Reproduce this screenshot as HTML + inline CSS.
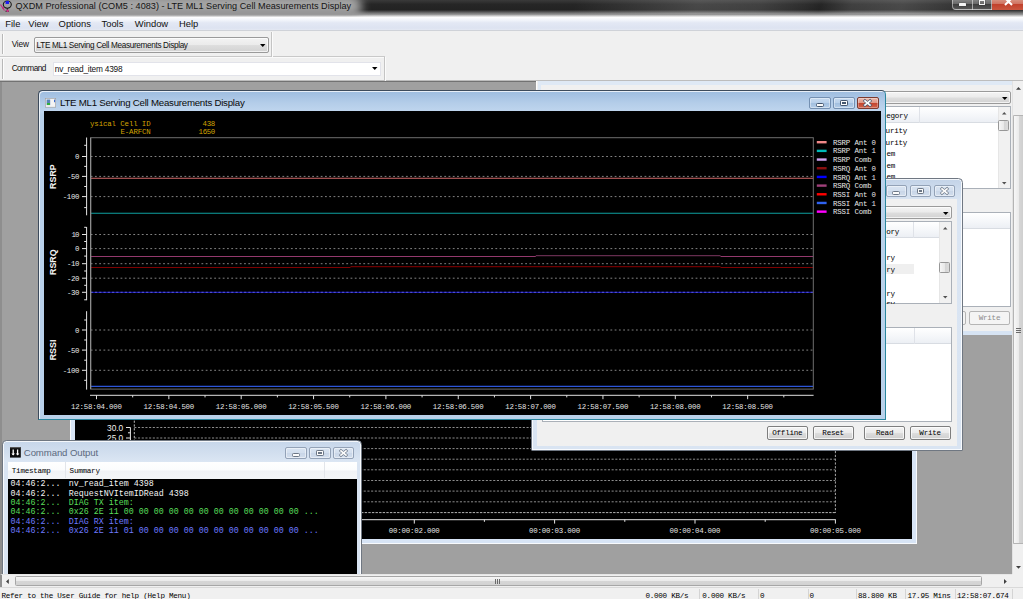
<!DOCTYPE html>
<html lang="en"><head><meta charset="utf-8"><title>QXDM Professional</title>
<style>
html,body{margin:0;padding:0;}
body{width:1023px;height:599px;overflow:hidden;position:relative;background:#a0a0a0;font-family:"Liberation Sans",sans-serif;font-size:9px;color:#000;}
div,span{position:absolute;box-sizing:border-box;white-space:nowrap;}
svg{position:absolute;overflow:visible;}
.ui{font-family:"Liberation Sans",sans-serif;}
.mono{font-family:"Liberation Mono",monospace;}
.sim{font-family:"Liberation Mono",monospace;font-size:7.6px;letter-spacing:-0.26px;color:#000;}
.btn{border:1px solid #7e7e7e;border-radius:2px;background:linear-gradient(#f4f4f4,#ebebeb 48%,#dddddd 52%,#cfcfcf);text-align:center;box-shadow:inset 0 0 0 1px rgba(255,255,255,.75);}
.cbtn{border:1px solid #93a2b7;border-radius:2px;background:linear-gradient(#d9e4f2,#d3dfee 48%,#c9d6e8 52%,#d2deed);box-shadow:inset 0 0 0 1px rgba(255,255,255,.45);}
.abtn{border:1px solid #7490b2;border-radius:2px;background:linear-gradient(#c6daf0,#b9d0ea 48%,#a2bfdf 52%,#b3cce8);box-shadow:inset 0 0 0 1px rgba(255,255,255,.4);}
.combo{border:1px solid #9a9a9a;border-radius:2px;background:linear-gradient(#f3f3f3,#ebebeb 48%,#dedede 52%,#d2d2d2);box-shadow:inset 0 0 0 1px rgba(255,255,255,.7);}
.lb{background:#fff;border:1px solid #aab0b8;}
.hdr{background:linear-gradient(#ffffff,#f4f6f9 60%,#eceff4);border-bottom:1px solid #d8dce2;}
</style></head>
<body>
<div style="left:0px;top:0px;width:1023px;height:17px;background:linear-gradient(#3a3a3a 0,#262626 25%,#232323 58%,#444 66%,#6c6c6c 75%,#949494 85%,#bababa 93%,#e2e2e2 100%);"></div>
<div style="left:0px;top:0px;width:1023px;height:13.5px;background:linear-gradient(108deg,rgba(255,255,255,0) 56%,rgba(255,255,255,.08) 62%,rgba(255,255,255,.16) 68%,rgba(255,255,255,.13) 74%,rgba(255,255,255,.04) 78.5%,rgba(255,255,255,0) 80%,rgba(255,255,255,.12) 83%,rgba(255,255,255,.17) 88%,rgba(255,255,255,.08) 93%,rgba(255,255,255,.02) 98%);"></div>
<div style="left:-12px;top:-5px;width:374px;height:24px;background:linear-gradient(#b0b0b0,#a2a2a2 55%,#8e8e8e);filter:blur(5px);border-radius:0 12px 12px 0;"></div>
<div style="left:0px;top:15px;width:1023px;height:2px;background:linear-gradient(rgba(200,200,200,0),#e8e8e8);"></div>
<svg style="left:0;top:0" width="15" height="14" viewBox="0 0 15 14"><ellipse cx="7.3" cy="4.6" rx="4" ry="3.6" fill="none" stroke="#1a1a1a" stroke-width="1.1"/><path d="M7.3 8 L7.3 11 M5.5 11.2 L9 11.2" stroke="#1a1a1a" stroke-width="1" fill="none"/><rect x="5.6" y="1" width="3.4" height="3" fill="#1b1bf0"/><path d="M0.5 4.5 L4.5 10.5" stroke="#c03080" stroke-width="1.2"/><circle cx="7.6" cy="10.8" r="1.3" fill="#d03088"/><circle cx="3.2" cy="8" r="1" fill="#c03080"/></svg>
<span class="ui" style="left:15.5px;top:-0.1px;font-size:9.1px;line-height:13px;color:#141414;letter-spacing:0.03px;">QXDM Professional (COM5 : 4083) - LTE ML1 Serving Cell Measurements Display</span>
<div style="left:951.5px;top:-2px;width:75px;height:12.3px;border:1px solid rgba(225,225,225,.55);border-radius:0 0 0 4px;background:linear-gradient(#8a8a8a,#6a6a6a 45%,#3d3d3d 50%,#555);"></div>
<div style="left:972px;top:-1px;width:1px;height:10.5px;background:rgba(230,230,230,.6);"></div>
<div style="left:991px;top:-1px;width:1px;height:10.5px;background:rgba(230,230,230,.6);"></div>
<div style="left:992px;top:-1px;width:32px;height:10.5px;background:linear-gradient(#d99684,#cf715f 45%,#c2412c 50%,#c9563f);"></div>
<div style="left:958.5px;top:3.4px;width:7px;height:2.4px;background:#f4f4f4;border-radius:.5px;box-shadow:0 0 1px #222;"></div>
<div style="left:978.5px;top:-0.5px;width:6px;height:5.5px;border:1.3px solid #f4f4f4;border-top-width:1.6px;box-shadow:0 0 1px #222;"></div>
<svg style="left:1004.3px;top:-2.3px" width="9" height="8" viewBox="0 0 9 8"><path d="M1 0 L8 7 M8 0 L1 7" stroke="#fff" stroke-width="2" fill="none"/></svg>
<div style="left:0px;top:17px;width:1023px;height:14px;background:linear-gradient(#ffffff 0,#f1f4fa 25%,#e3e8f4 45%,#dde3f1 85%,#e4e8f2 100%);border-bottom:1px solid #cfd2d8;"></div>
<span class="ui" style="left:5.3px;top:18.2px;font-size:9.4px;line-height:12px;color:#111;">File</span>
<span class="ui" style="left:28.3px;top:18.2px;font-size:9.4px;line-height:12px;color:#111;">View</span>
<span class="ui" style="left:58.6px;top:18.2px;font-size:9.4px;line-height:12px;color:#111;">Options</span>
<span class="ui" style="left:101.5px;top:18.2px;font-size:9.4px;line-height:12px;color:#111;">Tools</span>
<span class="ui" style="left:134.8px;top:18.2px;font-size:9.4px;line-height:12px;color:#111;">Window</span>
<span class="ui" style="left:179px;top:18.2px;font-size:9.4px;line-height:12px;color:#111;">Help</span>
<div style="left:0px;top:31px;width:1023px;height:50px;background:#f0f0f0;"></div>
<div style="left:0px;top:80px;width:1023px;height:1px;background:#bdbdbd;"></div>
<div style="left:0px;top:81px;width:1023px;height:1px;background:#727272;"></div>
<div style="left:0px;top:56px;width:384.5px;height:1px;background:#c9c9c9;"></div>
<div style="left:0px;top:57px;width:384.5px;height:1px;background:#fafafa;"></div>
<div style="left:271px;top:32px;width:1px;height:24.5px;background:#c4c4c4;"></div>
<div style="left:272px;top:32px;width:1px;height:24.5px;background:#fbfbfb;"></div>
<div style="left:384px;top:56.5px;width:1px;height:24px;background:#c4c4c4;"></div>
<div style="left:385px;top:56.5px;width:1px;height:24px;background:#fbfbfb;"></div>
<div style="left:2px;top:34px;width:1px;height:20px;background:#b8b8b8;"></div>
<div style="left:3px;top:34px;width:1px;height:20px;background:#fdfdfd;"></div>
<div style="left:2px;top:59px;width:1px;height:20px;background:#b8b8b8;"></div>
<div style="left:3px;top:59px;width:1px;height:20px;background:#fdfdfd;"></div>
<span class="ui" style="left:11.7px;top:38.6px;font-size:8.3px;line-height:11px;color:#111;letter-spacing:-0.2px;">View</span>
<div class="combo" style="left:34.3px;top:37px;width:235px;height:15.8px;"></div>
<span class="ui" style="left:36.6px;top:40.1px;font-size:8.2px;line-height:11px;color:#111;letter-spacing:-0.33px;">LTE ML1 Serving Cell Measurements Display</span>
<svg style="left:260.25px;top:43.8px" width="5.5" height="3" viewBox="0 0 5.5 3"><polygon points="0,0 5.5,0 2.75,3" fill="#000"/></svg>
<span class="ui" style="left:11.7px;top:63.3px;font-size:8.3px;line-height:11px;color:#111;letter-spacing:-0.62px;">Command</span>
<div style="left:52.5px;top:62px;width:328px;height:14px;background:#fff;border:1px solid #e2e3ea;"></div>
<span class="ui" style="left:54.8px;top:63.7px;font-size:8.3px;line-height:11px;color:#111;letter-spacing:-0.2px;">nv_read_item 4398</span>
<svg style="left:371.55px;top:67.3px" width="5.5" height="3" viewBox="0 0 5.5 3"><polygon points="0,0 5.5,0 2.75,3" fill="#000"/></svg>
<div style="left:0px;top:82px;width:1012px;height:493px;background:#a0a0a0;border-left:2px solid #8e8e8e;"></div>
<div style="left:536px;top:81px;width:475.5px;height:254px;background:#f0f0f0;border-left:1.5px solid #fdfdfd;"></div>
<div style="left:537.5px;top:81px;width:474.0px;height:3.5px;background:#dfe9f5;"></div>
<div style="left:537.5px;top:81px;width:3.5px;height:254px;background:#dfe9f5;"></div>
<div style="left:537.5px;top:330.7px;width:474.0px;height:4.3px;background:#d6e3f3;"></div>
<div class="combo" style="left:880px;top:90.8px;width:131px;height:13.2px;"></div>
<svg style="left:1002.25px;top:96.8px" width="5.5" height="3" viewBox="0 0 5.5 3"><polygon points="0,0 5.5,0 2.75,3" fill="#000"/></svg>
<div class="lb" style="left:880px;top:106.2px;width:131px;height:83.3px;"></div>
<div class="hdr" style="left:881px;top:107.2px;width:116.5px;height:16.3px;"></div>
<div style="left:919.2px;top:107.2px;width:1px;height:16px;background:#dfe2e8;"></div>
<span class="sim" style="left:886.2px;top:111.4px;line-height:10px;">egory</span>
<span class="sim" style="left:885.6px;top:126px;line-height:10px;">urity</span>
<span class="sim" style="left:885.6px;top:137.5px;line-height:10px;">urity</span>
<span class="sim" style="left:886.5px;top:149px;line-height:10px;">em</span>
<span class="sim" style="left:886.5px;top:160.5px;line-height:10px;">em</span>
<span class="sim" style="left:886.5px;top:172px;line-height:10px;">em</span>
<div style="left:997.6px;top:107.2px;width:12.4px;height:81.3px;background:#f1f1f1;border-left:1px solid #e6e6e6;"></div>
<svg style="left:1001.75px;top:112.2px" width="4.5" height="2.6" viewBox="0 0 4.5 2.6"><polygon points="0,2.6 4.5,2.6 2.25,0" fill="#505050"/></svg>
<div style="left:998.3px;top:120px;width:11.2px;height:10.6px;border:1px solid #979797;border-radius:1.5px;background:linear-gradient(to right,#f6f6f6,#e9e9e9 50%,#d4d4d4 52%,#dcdcdc);"></div>
<svg style="left:1001.75px;top:181.7px" width="4.5" height="2.6" viewBox="0 0 4.5 2.6"><polygon points="0,0 4.5,0 2.25,2.6" fill="#505050"/></svg>
<div class="lb" style="left:880px;top:211.7px;width:131px;height:95.6px;"></div>
<div class="hdr" style="left:881px;top:212.7px;width:129px;height:16.2px;"></div>
<div style="left:935px;top:311.3px;width:30.5px;height:13.3px;border:1px solid #b5b5b5;border-radius:2px;background:#f4f4f4;"></div>
<div style="left:969.3px;top:311.3px;width:41.2px;height:13.3px;border:1px solid #b5b5b5;border-radius:2px;background:#f4f4f4;"></div>
<span class="sim" style="left:978.7px;top:313px;line-height:10px;color:#8c8c8c;">Write</span>
<div style="left:69.5px;top:300px;width:847.5px;height:243.5px;background:#d7e4f5;border:1.3px solid #f8fafd;border-top:none;"></div>
<div style="left:75px;top:300px;width:836.5px;height:238.5px;background:#000;"></div>
<svg style="left:75px;top:419px" width="842" height="125" viewBox="75 419 842 125" font-family="Liberation Sans, sans-serif"><path d="M134.3 420.6 V513" stroke="#b8b8b8" stroke-width="1" stroke-dasharray="2.2 1.6" fill="none"/><path d="M835.4 420.6 V513" stroke="#a8a8a8" stroke-width="1" stroke-dasharray="2.2 1.6" fill="none"/><path d="M134.3 427.5 H835.4" stroke="#8c8c8c" stroke-width="1" stroke-dasharray="2.1 1.6" fill="none"/><path d="M134.3 438 H835.4" stroke="#8c8c8c" stroke-width="1" stroke-dasharray="2.1 1.6" fill="none"/><path d="M134.3 448.6 H835.4" stroke="#8c8c8c" stroke-width="1" stroke-dasharray="2.1 1.6" fill="none"/><path d="M134.3 459.2 H835.4" stroke="#8c8c8c" stroke-width="1" stroke-dasharray="2.1 1.6" fill="none"/><path d="M134.3 469.8 H835.4" stroke="#8c8c8c" stroke-width="1" stroke-dasharray="2.1 1.6" fill="none"/><path d="M134.3 480.5 H835.4" stroke="#8c8c8c" stroke-width="1" stroke-dasharray="2.1 1.6" fill="none"/><path d="M134.3 491.1 H835.4" stroke="#8c8c8c" stroke-width="1" stroke-dasharray="2.1 1.6" fill="none"/><path d="M134.3 501.8 H835.4" stroke="#8c8c8c" stroke-width="1" stroke-dasharray="2.1 1.6" fill="none"/><path d="M134.3 512.6 H835.4" stroke="#b4b4b4" stroke-width="1" stroke-dasharray="2.4 1.2" fill="none"/><path d="M130.4 427.5 V520" stroke="#e8e8e8" stroke-width="1" fill="none"/><path d="M126 427.5 H130.4" stroke="#e8e8e8" stroke-width="1" fill="none"/><path d="M128 432.8 H130.4" stroke="#e8e8e8" stroke-width="1" fill="none"/><path d="M126 438 H130.4" stroke="#e8e8e8" stroke-width="1" fill="none"/><path d="M128 443.3 H130.4" stroke="#e8e8e8" stroke-width="1" fill="none"/><path d="M126 448.6 H130.4" stroke="#e8e8e8" stroke-width="1" fill="none"/><path d="M128 453.90000000000003 H130.4" stroke="#e8e8e8" stroke-width="1" fill="none"/><path d="M126 459.2 H130.4" stroke="#e8e8e8" stroke-width="1" fill="none"/><path d="M128 464.5 H130.4" stroke="#e8e8e8" stroke-width="1" fill="none"/><path d="M126 469.8 H130.4" stroke="#e8e8e8" stroke-width="1" fill="none"/><path d="M128 475.1 H130.4" stroke="#e8e8e8" stroke-width="1" fill="none"/><path d="M126 480.5 H130.4" stroke="#e8e8e8" stroke-width="1" fill="none"/><path d="M128 485.8 H130.4" stroke="#e8e8e8" stroke-width="1" fill="none"/><path d="M126 491.1 H130.4" stroke="#e8e8e8" stroke-width="1" fill="none"/><path d="M128 496.40000000000003 H130.4" stroke="#e8e8e8" stroke-width="1" fill="none"/><path d="M126 501.8 H130.4" stroke="#e8e8e8" stroke-width="1" fill="none"/><path d="M128 507.1 H130.4" stroke="#e8e8e8" stroke-width="1" fill="none"/><text x="123.2" y="430.7" font-size="8.3" fill="#f0f0f0" text-anchor="end">30.0</text><text x="123.2" y="441" font-size="8.3" fill="#f0f0f0" text-anchor="end">25.0</text><path d="M130 519.7 H835.8" stroke="#e6e6e6" stroke-width="1" fill="none"/><path d="M414.3 519.7 V523.6" stroke="#e6e6e6" stroke-width="1" fill="none"/><path d="M344.1 519.7 V521.8" stroke="#e6e6e6" stroke-width="1" fill="none"/><text x="414.3" y="532.8" font-size="7.4" fill="#e4e4e4" text-anchor="middle" font-family="Liberation Mono, monospace" textLength="51" lengthAdjust="spacing">00:00:02.000</text><path d="M554.6 519.7 V523.6" stroke="#e6e6e6" stroke-width="1" fill="none"/><path d="M484.40000000000003 519.7 V521.8" stroke="#e6e6e6" stroke-width="1" fill="none"/><text x="554.6" y="532.8" font-size="7.4" fill="#e4e4e4" text-anchor="middle" font-family="Liberation Mono, monospace" textLength="51" lengthAdjust="spacing">00:00:03.000</text><path d="M695 519.7 V523.6" stroke="#e6e6e6" stroke-width="1" fill="none"/><path d="M624.8 519.7 V521.8" stroke="#e6e6e6" stroke-width="1" fill="none"/><text x="695" y="532.8" font-size="7.4" fill="#e4e4e4" text-anchor="middle" font-family="Liberation Mono, monospace" textLength="51" lengthAdjust="spacing">00:00:04.000</text><path d="M835.4 519.7 V523.6" stroke="#e6e6e6" stroke-width="1" fill="none"/><path d="M765.1999999999999 519.7 V521.8" stroke="#e6e6e6" stroke-width="1" fill="none"/><text x="835.4" y="532.8" font-size="7.4" fill="#e4e4e4" text-anchor="middle" font-family="Liberation Mono, monospace" textLength="51" lengthAdjust="spacing">00:00:05.000</text></svg>
<div style="left:530.7px;top:178.2px;width:432.0px;height:272.8px;border:1px solid #6f7782;border-radius:4.5px 4.5px 1px 1px;background:linear-gradient(#c3d3e8 0,#d2dfef 14px,#dae5f3 22px,#d9e4f2 100%);box-shadow:inset 0 0 0 1px rgba(255,255,255,.8);"></div>
<div style="left:536.7px;top:199px;width:420.0px;height:246.8px;background:#f0f0f0;"></div>
<div class="cbtn" style="left:885.6px;top:185.2px;width:21.6px;height:11.8px;"></div>
<div class="cbtn" style="left:909.6px;top:185.2px;width:21.6px;height:11.8px;"></div>
<div class="cbtn" style="left:933.6px;top:185.2px;width:21.6px;height:11.8px;"></div>
<div style="left:892.4px;top:191.2px;width:8px;height:3.7px;background:#fbfbfb;border:1px solid #6c7786;border-radius:1.5px;"></div>
<div style="left:916.6999999999999px;top:188.29999999999998px;width:7.4px;height:5.8px;background:#fbfbfb;border:1px solid #6c7786;border-radius:1.2px;"></div>
<div style="left:918.6999999999999px;top:190.2px;width:3.4px;height:1.9px;background:#6c7786;"></div>
<svg style="left:939.9px;top:187.29999999999998px" width="9" height="8" viewBox="0 0 9 8"><path d="M2 1.9 L7 6.1 M7 1.9 L2 6.1" stroke="#6c7786" stroke-width="3" stroke-linecap="square" fill="none"/><path d="M2 1.9 L7 6.1 M7 1.9 L2 6.1" stroke="#fdfdfd" stroke-width="1.8" stroke-linecap="square" fill="none"/></svg>
<div class="combo" style="left:600px;top:206.4px;width:351.6px;height:13px;"></div>
<svg style="left:942.85px;top:212.0px" width="5.5" height="3" viewBox="0 0 5.5 3"><polygon points="0,0 5.5,0 2.75,3" fill="#000"/></svg>
<div class="lb" style="left:542.4px;top:221.2px;width:409.2px;height:83.2px;"></div>
<div class="hdr" style="left:543.4px;top:222.2px;width:395.2px;height:15.8px;"></div>
<div style="left:912.9px;top:222.2px;width:1px;height:15.6px;background:#dfe2e8;"></div>
<span class="sim" style="left:886.2px;top:226.6px;line-height:10px;">ory</span>
<div style="left:543.4px;top:263.6px;width:370.6px;height:10.2px;background:#efefef;"></div>
<span class="sim" style="left:886.2px;top:253.3px;line-height:10px;">ry</span>
<span class="sim" style="left:886.2px;top:265.0px;line-height:10px;">ry</span>
<span class="sim" style="left:886.2px;top:288.5px;line-height:10px;">ry</span>
<div style="left:886.2px;top:299px;width:30px;height:4.6px;overflow:hidden;"><span class="sim" style="left:0;top:0;line-height:10px;">ry</span></div>
<div style="left:938.8px;top:222.2px;width:11.8px;height:81.2px;background:#f1f1f1;border-left:1px solid #e6e6e6;"></div>
<svg style="left:942.75px;top:227.1px" width="4.5" height="2.6" viewBox="0 0 4.5 2.6"><polygon points="0,2.6 4.5,2.6 2.25,0" fill="#505050"/></svg>
<div style="left:939.2px;top:262px;width:10.4px;height:10.7px;border:1px solid #979797;border-radius:1.5px;background:linear-gradient(to right,#f6f6f6,#e9e9e9 50%,#d4d4d4 52%,#dcdcdc);"></div>
<svg style="left:942.75px;top:296.3px" width="4.5" height="2.6" viewBox="0 0 4.5 2.6"><polygon points="0,0 4.5,0 2.25,2.6" fill="#505050"/></svg>
<div class="lb" style="left:542.4px;top:327.4px;width:409.2px;height:94.8px;"></div>
<div class="hdr" style="left:543.4px;top:328.4px;width:407.2px;height:15.8px;"></div>
<div style="left:913.5px;top:328.4px;width:1px;height:15.6px;background:#dfe2e8;"></div>
<div class="btn" style="left:766.6px;top:426px;width:41.6px;height:13.5px;"></div>
<span class="sim" style="left:772.25px;top:427.8px;line-height:10px;">Offline</span>
<div class="btn" style="left:812.5px;top:426px;width:41.4px;height:13.5px;"></div>
<span class="sim" style="left:822.35px;top:427.8px;line-height:10px;">Reset</span>
<div class="btn" style="left:863.9px;top:426px;width:41.6px;height:13.5px;"></div>
<span class="sim" style="left:875.9999999999999px;top:427.8px;line-height:10px;">Read</span>
<div class="btn" style="left:909.5px;top:426px;width:41.4px;height:13.5px;"></div>
<span class="sim" style="left:919.35px;top:427.8px;line-height:10px;">Write</span>
<div style="left:38.2px;top:90.2px;width:847.5999999999999px;height:329.8px;border:1px solid #3d4b5c;border-right-color:#2a879f;border-bottom-color:#2a879f;border-radius:4.5px 4.5px 0 0;background:linear-gradient(#9dbcdf 0,#b4cde9 12px,#c0d6ee 21px,#b9d1ea 24px,#b9d1ea 100%);box-shadow:inset 1px 1px 0 0 rgba(255,255,255,.75);"></div>
<div style="left:44.1px;top:111.4px;width:836.5px;height:303.3px;background:#000;"></div>
<svg style="left:45px;top:98px" width="11" height="9.5" viewBox="0 0 11 9.5"><rect x="0.3" y="0.3" width="10.4" height="8.9" fill="#f4f4f4" stroke="#9a9a9a" stroke-width=".6"/><rect x="1.6" y="1.5" width="3.6" height="5.6" fill="#5a84b8"/><rect x="2" y="5" width="3" height="2" fill="#2fae3a"/><rect x="9" y="1.6" width="1.1" height="2.6" fill="#3a6ad0"/></svg>
<span class="ui" style="left:60px;top:96.4px;font-size:9.7px;line-height:13px;color:#0a0a0a;letter-spacing:-0.25px;">LTE ML1 Serving Cell Measurements Display</span>
<div class="abtn" style="left:809.2px;top:97.1px;width:21.6px;height:12.3px;"></div>
<div class="abtn" style="left:833.2px;top:97.1px;width:21.6px;height:12.3px;"></div>
<div style="left:857px;top:97.1px;width:21.6px;height:12.3px;border:1px solid #7c3a30;border-radius:2px;background:linear-gradient(#ebb8ab,#de9686 48%,#c4442d 52%,#d2654e);box-shadow:inset 0 0 0 1px rgba(255,255,255,.3);"></div>
<div style="left:816.0px;top:103.35px;width:8px;height:3.7px;background:#fbfbfb;border:1px solid #44566e;border-radius:1.5px;"></div>
<div style="left:840.3px;top:100.45px;width:7.4px;height:5.8px;background:#fbfbfb;border:1px solid #44566e;border-radius:1.2px;"></div>
<div style="left:842.3px;top:102.35px;width:3.4px;height:1.9px;background:#44566e;"></div>
<svg style="left:863.3px;top:99.45px" width="9" height="8" viewBox="0 0 9 8"><path d="M2 1.9 L7 6.1 M7 1.9 L2 6.1" stroke="#44566e" stroke-width="3" stroke-linecap="square" fill="none"/><path d="M2 1.9 L7 6.1 M7 1.9 L2 6.1" stroke="#fdfdfd" stroke-width="1.8" stroke-linecap="square" fill="none"/></svg>
<svg style="left:44px;top:111px" width="837" height="304" viewBox="44 111 837 304" font-family="Liberation Mono, monospace"><path d="M90.7 156.5 H813.3" stroke="#828282" stroke-width="1" stroke-dasharray="1.8 2.46" fill="none"/><path d="M90.7 176.4 H813.3" stroke="#828282" stroke-width="1" stroke-dasharray="1.8 2.46" fill="none"/><path d="M90.7 196.6 H813.3" stroke="#828282" stroke-width="1" stroke-dasharray="1.8 2.46" fill="none"/><path d="M90.7 234.5 H813.3" stroke="#828282" stroke-width="1" stroke-dasharray="1.8 2.46" fill="none"/><path d="M90.7 248.6 H813.3" stroke="#828282" stroke-width="1" stroke-dasharray="1.8 2.46" fill="none"/><path d="M90.7 263.7 H813.3" stroke="#828282" stroke-width="1" stroke-dasharray="1.8 2.46" fill="none"/><path d="M90.7 278.2 H813.3" stroke="#828282" stroke-width="1" stroke-dasharray="1.8 2.46" fill="none"/><path d="M90.7 330 H813.3" stroke="#828282" stroke-width="1" stroke-dasharray="1.8 2.46" fill="none"/><path d="M90.7 350.1 H813.3" stroke="#828282" stroke-width="1" stroke-dasharray="1.8 2.46" fill="none"/><path d="M90.7 370.3 H813.3" stroke="#828282" stroke-width="1" stroke-dasharray="1.8 2.46" fill="none"/><path d="M90.7 178.3 H813.3" stroke="#d46a6a" stroke-width="1.1" fill="none"/><path d="M90.7 213.3 H813.3" stroke="#0ea0a0" stroke-width="1.1" fill="none"/><path d="M90.7 256.4 H535.8 M720.5 256.4 H813.3" stroke="#93396d" stroke-width="1.05" fill="none"/><path d="M535.8 255.7 H720.5" stroke="#642c4e" stroke-width="1.2" fill="none"/><path d="M90.7 267.5 H350.5 M720.5 267.5 H813.3" stroke="#7e0202" stroke-width="1" fill="none"/><path d="M350.5 266.6 H720.5" stroke="#6e0000" stroke-width="1.1" fill="none"/><path d="M90.7 292.3 H813.3" stroke="#1414a8" stroke-width="1.3" fill="none"/><path d="M90.7 292.3 H813.3" stroke="#5c5cd6" stroke-width="1" stroke-dasharray="2.2 2.06" fill="none"/><path d="M90.7 386.4 H813.3" stroke="#2c55d8" stroke-width="1.2" fill="none"/><rect x="90.7" y="137.7" width="722.5999999999999" height="251.40000000000003" fill="none" stroke="#6e6e6e" stroke-width="1"/><path d="M90.7 137.7 V389.1" stroke="#9a9a9a" stroke-width="1" fill="none"/><path d="M86.6 137.5 V215.3" stroke="#e4e4e4" stroke-width="1" fill="none"/><path d="M82 156.5 H86.6" stroke="#e4e4e4" stroke-width="1" fill="none"/><text x="79.4" y="159.1" font-size="7.4" fill="#e8e8e8" text-anchor="end" textLength="3.7" lengthAdjust="spacing">0</text><path d="M82 176.4 H86.6" stroke="#e4e4e4" stroke-width="1" fill="none"/><text x="79.4" y="179.0" font-size="7.4" fill="#e8e8e8" text-anchor="end" textLength="12.3" lengthAdjust="spacing">-50</text><path d="M82 196.6 H86.6" stroke="#e4e4e4" stroke-width="1" fill="none"/><text x="79.4" y="199.2" font-size="7.4" fill="#e8e8e8" text-anchor="end" textLength="16.6" lengthAdjust="spacing">-100</text><path d="M84.2 145.3 H86.6" stroke="#e4e4e4" stroke-width="1" fill="none"/><path d="M84.2 166.4 H86.6" stroke="#e4e4e4" stroke-width="1" fill="none"/><path d="M84.2 186.5 H86.6" stroke="#e4e4e4" stroke-width="1" fill="none"/><path d="M84.2 207.6 H86.6" stroke="#e4e4e4" stroke-width="1" fill="none"/><path d="M86.6 227 V300.2" stroke="#e4e4e4" stroke-width="1" fill="none"/><path d="M82 234.5 H86.6" stroke="#e4e4e4" stroke-width="1" fill="none"/><text x="79.4" y="237.1" font-size="7.4" fill="#e8e8e8" text-anchor="end" textLength="8.0" lengthAdjust="spacing">10</text><path d="M82 248.6 H86.6" stroke="#e4e4e4" stroke-width="1" fill="none"/><text x="79.4" y="251.2" font-size="7.4" fill="#e8e8e8" text-anchor="end" textLength="3.7" lengthAdjust="spacing">0</text><path d="M82 263.7 H86.6" stroke="#e4e4e4" stroke-width="1" fill="none"/><text x="79.4" y="266.3" font-size="7.4" fill="#e8e8e8" text-anchor="end" textLength="12.3" lengthAdjust="spacing">-10</text><path d="M82 278.2 H86.6" stroke="#e4e4e4" stroke-width="1" fill="none"/><text x="79.4" y="280.8" font-size="7.4" fill="#e8e8e8" text-anchor="end" textLength="12.3" lengthAdjust="spacing">-20</text><path d="M82 292.3 H86.6" stroke="#e4e4e4" stroke-width="1" fill="none"/><text x="79.4" y="294.90000000000003" font-size="7.4" fill="#e8e8e8" text-anchor="end" textLength="12.3" lengthAdjust="spacing">-30</text><path d="M84.2 227.3 H86.6" stroke="#e4e4e4" stroke-width="1" fill="none"/><path d="M84.2 241.5 H86.6" stroke="#e4e4e4" stroke-width="1" fill="none"/><path d="M84.2 256.1 H86.6" stroke="#e4e4e4" stroke-width="1" fill="none"/><path d="M84.2 271 H86.6" stroke="#e4e4e4" stroke-width="1" fill="none"/><path d="M84.2 285.3 H86.6" stroke="#e4e4e4" stroke-width="1" fill="none"/><path d="M84.2 299.8 H86.6" stroke="#e4e4e4" stroke-width="1" fill="none"/><path d="M86.6 311.2 V389.6" stroke="#e4e4e4" stroke-width="1" fill="none"/><path d="M82 330 H86.6" stroke="#e4e4e4" stroke-width="1" fill="none"/><text x="79.4" y="332.6" font-size="7.4" fill="#e8e8e8" text-anchor="end" textLength="3.7" lengthAdjust="spacing">0</text><path d="M82 350.1 H86.6" stroke="#e4e4e4" stroke-width="1" fill="none"/><text x="79.4" y="352.70000000000005" font-size="7.4" fill="#e8e8e8" text-anchor="end" textLength="12.3" lengthAdjust="spacing">-50</text><path d="M82 370.3 H86.6" stroke="#e4e4e4" stroke-width="1" fill="none"/><text x="79.4" y="372.90000000000003" font-size="7.4" fill="#e8e8e8" text-anchor="end" textLength="16.6" lengthAdjust="spacing">-100</text><path d="M84.2 320 H86.6" stroke="#e4e4e4" stroke-width="1" fill="none"/><path d="M84.2 340 H86.6" stroke="#e4e4e4" stroke-width="1" fill="none"/><path d="M84.2 360.2 H86.6" stroke="#e4e4e4" stroke-width="1" fill="none"/><path d="M84.2 380.3 H86.6" stroke="#e4e4e4" stroke-width="1" fill="none"/><text transform="translate(56.2 176.6) rotate(-90)" font-family="Liberation Sans, sans-serif" font-weight="bold" font-size="8.9" fill="#f4f4f4" text-anchor="middle">RSRP</text><text transform="translate(56.2 262.2) rotate(-90)" font-family="Liberation Sans, sans-serif" font-weight="bold" font-size="8.9" fill="#f4f4f4" text-anchor="middle">RSRQ</text><text transform="translate(56.2 350) rotate(-90)" font-family="Liberation Sans, sans-serif" font-weight="bold" font-size="8.9" fill="#f4f4f4" text-anchor="middle">RSSI</text><path d="M90 395.3 H813.5999999999999" stroke="#e0e0e0" stroke-width="1" fill="none"/><path d="M96.50 395.3 V399.2" stroke="#e0e0e0" stroke-width="1" fill="none"/><path d="M132.68 395.3 V397.4" stroke="#e0e0e0" stroke-width="1" fill="none"/><text x="96.50" y="408.8" font-size="7.4" fill="#e4e4e4" text-anchor="middle" textLength="50.8" lengthAdjust="spacing">12:58:04.000</text><path d="M168.85 395.3 V399.2" stroke="#e0e0e0" stroke-width="1" fill="none"/><path d="M205.02 395.3 V397.4" stroke="#e0e0e0" stroke-width="1" fill="none"/><text x="168.85" y="408.8" font-size="7.4" fill="#e4e4e4" text-anchor="middle" textLength="50.8" lengthAdjust="spacing">12:58:04.500</text><path d="M241.20 395.3 V399.2" stroke="#e0e0e0" stroke-width="1" fill="none"/><path d="M277.38 395.3 V397.4" stroke="#e0e0e0" stroke-width="1" fill="none"/><text x="241.20" y="408.8" font-size="7.4" fill="#e4e4e4" text-anchor="middle" textLength="50.8" lengthAdjust="spacing">12:58:05.000</text><path d="M313.55 395.3 V399.2" stroke="#e0e0e0" stroke-width="1" fill="none"/><path d="M349.72 395.3 V397.4" stroke="#e0e0e0" stroke-width="1" fill="none"/><text x="313.55" y="408.8" font-size="7.4" fill="#e4e4e4" text-anchor="middle" textLength="50.8" lengthAdjust="spacing">12:58:05.500</text><path d="M385.90 395.3 V399.2" stroke="#e0e0e0" stroke-width="1" fill="none"/><path d="M422.07 395.3 V397.4" stroke="#e0e0e0" stroke-width="1" fill="none"/><text x="385.90" y="408.8" font-size="7.4" fill="#e4e4e4" text-anchor="middle" textLength="50.8" lengthAdjust="spacing">12:58:06.000</text><path d="M458.25 395.3 V399.2" stroke="#e0e0e0" stroke-width="1" fill="none"/><path d="M494.43 395.3 V397.4" stroke="#e0e0e0" stroke-width="1" fill="none"/><text x="458.25" y="408.8" font-size="7.4" fill="#e4e4e4" text-anchor="middle" textLength="50.8" lengthAdjust="spacing">12:58:06.500</text><path d="M530.60 395.3 V399.2" stroke="#e0e0e0" stroke-width="1" fill="none"/><path d="M566.77 395.3 V397.4" stroke="#e0e0e0" stroke-width="1" fill="none"/><text x="530.60" y="408.8" font-size="7.4" fill="#e4e4e4" text-anchor="middle" textLength="50.8" lengthAdjust="spacing">12:58:07.000</text><path d="M602.95 395.3 V399.2" stroke="#e0e0e0" stroke-width="1" fill="none"/><path d="M639.12 395.3 V397.4" stroke="#e0e0e0" stroke-width="1" fill="none"/><text x="602.95" y="408.8" font-size="7.4" fill="#e4e4e4" text-anchor="middle" textLength="50.8" lengthAdjust="spacing">12:58:07.500</text><path d="M675.30 395.3 V399.2" stroke="#e0e0e0" stroke-width="1" fill="none"/><path d="M711.47 395.3 V397.4" stroke="#e0e0e0" stroke-width="1" fill="none"/><text x="675.30" y="408.8" font-size="7.4" fill="#e4e4e4" text-anchor="middle" textLength="50.8" lengthAdjust="spacing">12:58:08.000</text><path d="M747.65 395.3 V399.2" stroke="#e0e0e0" stroke-width="1" fill="none"/><path d="M783.82 395.3 V397.4" stroke="#e0e0e0" stroke-width="1" fill="none"/><text x="747.65" y="408.8" font-size="7.4" fill="#e4e4e4" text-anchor="middle" textLength="50.8" lengthAdjust="spacing">12:58:08.500</text><text x="150.6" y="126.3" font-size="7.4" fill="#d2a200" text-anchor="end" textLength="60.6" lengthAdjust="spacing">ysical Cell ID</text><text x="215.2" y="126.3" font-size="7.4" fill="#d2a200" text-anchor="end" textLength="12.6" lengthAdjust="spacing">438</text><text x="150.6" y="134" font-size="7.4" fill="#d2a200" text-anchor="end" textLength="30" lengthAdjust="spacing">E-ARFCN</text><text x="215.2" y="134" font-size="7.4" fill="#d2a200" text-anchor="end" textLength="16.6" lengthAdjust="spacing">1650</text><rect x="816.8" y="141.00" width="9.8" height="2.4" fill="#f08888"/><text x="833" y="144.80" font-size="7.4" fill="#e8e8e8" textLength="43.0" lengthAdjust="spacing">RSRP Ant 0</text><rect x="816.8" y="149.68" width="9.8" height="2.4" fill="#00b8b8"/><text x="833" y="153.48" font-size="7.4" fill="#e8e8e8" textLength="43.0" lengthAdjust="spacing">RSRP Ant 1</text><rect x="816.8" y="158.36" width="9.8" height="2.4" fill="#cfa2f2"/><text x="833" y="162.16" font-size="7.4" fill="#e8e8e8" textLength="38.7" lengthAdjust="spacing">RSRP Comb</text><rect x="816.8" y="167.04" width="9.8" height="2.4" fill="#8a1010"/><text x="833" y="170.84" font-size="7.4" fill="#e8e8e8" textLength="43.0" lengthAdjust="spacing">RSRQ Ant 0</text><rect x="816.8" y="175.72" width="9.8" height="2.4" fill="#0000ff"/><text x="833" y="179.52" font-size="7.4" fill="#e8e8e8" textLength="43.0" lengthAdjust="spacing">RSRQ Ant 1</text><rect x="816.8" y="184.40" width="9.8" height="2.4" fill="#a0407a"/><text x="833" y="188.20" font-size="7.4" fill="#e8e8e8" textLength="38.7" lengthAdjust="spacing">RSRQ Comb</text><rect x="816.8" y="193.08" width="9.8" height="2.4" fill="#ff0000"/><text x="833" y="196.88" font-size="7.4" fill="#e8e8e8" textLength="43.0" lengthAdjust="spacing">RSSI Ant 0</text><rect x="816.8" y="201.76" width="9.8" height="2.4" fill="#2f62f0"/><text x="833" y="205.56" font-size="7.4" fill="#e8e8e8" textLength="43.0" lengthAdjust="spacing">RSSI Ant 1</text><rect x="816.8" y="210.44" width="9.8" height="2.4" fill="#ff00ff"/><text x="833" y="214.24" font-size="7.4" fill="#e8e8e8" textLength="38.7" lengthAdjust="spacing">RSSI Comb</text></svg>
<div style="left:2.4px;top:440.3px;width:359.3px;height:149.7px;border:1px solid #6f7782;border-radius:4.5px 4.5px 0 0;background:linear-gradient(#c6d6ea 0,#d2dfef 12px,#dbe6f3 21px,#d9e4f2 24px,#d9e4f2 100%);box-shadow:inset 0 0 0 1px rgba(255,255,255,.8);"></div>
<svg style="left:9.5px;top:447.3px" width="10.8" height="10.6" viewBox="0 0 10.8 10.6"><rect width="10.8" height="10.6" fill="#0a0a0a"/><rect y="0" width="10.8" height="1.2" fill="#555"/><path d="M3.2 2.5 V8 M7.6 2.5 V8" stroke="#fff" stroke-width="1.3"/><path d="M1.4 6.4 L3.2 8.6 L5 6.4 Z M5.8 6.4 L7.6 8.6 L9.4 6.4 Z" fill="#fff"/></svg>
<span class="ui" style="left:23.8px;top:446.1px;font-size:9.6px;line-height:13px;color:#5b6a7e;letter-spacing:-0.1px;">Command Output</span>
<div class="cbtn" style="left:285.4px;top:447px;width:21.6px;height:12px;"></div>
<div class="cbtn" style="left:309.2px;top:447px;width:21.6px;height:12px;"></div>
<div class="cbtn" style="left:332.8px;top:447px;width:21.6px;height:12px;"></div>
<div style="left:292.2px;top:453.1px;width:8px;height:3.7px;background:#fbfbfb;border:1px solid #6c7786;border-radius:1.5px;"></div>
<div style="left:316.3px;top:450.2px;width:7.4px;height:5.8px;background:#fbfbfb;border:1px solid #6c7786;border-radius:1.2px;"></div>
<div style="left:318.3px;top:452.1px;width:3.4px;height:1.9px;background:#6c7786;"></div>
<svg style="left:339.1px;top:449.2px" width="9" height="8" viewBox="0 0 9 8"><path d="M2 1.9 L7 6.1 M7 1.9 L2 6.1" stroke="#6c7786" stroke-width="3" stroke-linecap="square" fill="none"/><path d="M2 1.9 L7 6.1 M7 1.9 L2 6.1" stroke="#fdfdfd" stroke-width="1.8" stroke-linecap="square" fill="none"/></svg>
<div style="left:7.8px;top:461.8px;width:348.8px;height:16.9px;background:linear-gradient(#ffffff,#fbfcfd 45%,#f1f3f6 55%,#f4f6f8);"></div>
<div style="left:65px;top:461.8px;width:1px;height:16.5px;background:#e2e5ea;"></div>
<div style="left:324px;top:461.8px;width:1px;height:16.5px;background:#e2e5ea;"></div>
<span class="sim" style="left:11.8px;top:466.4px;line-height:10px;">Timestamp</span>
<span class="sim" style="left:69.6px;top:466.4px;line-height:10px;">Summary</span>
<div style="left:7.8px;top:478.7px;width:348.8px;height:100px;background:#000;"></div>
<span class="mono" style="left:10.6px;top:479.3px;font-size:8.33px;line-height:10px;color:#f4f4f4;">04:46:2...</span>
<span class="mono" style="left:68.8px;top:479.3px;font-size:8.33px;line-height:10px;color:#f4f4f4;">nv_read_item 4398</span>
<span class="mono" style="left:10.6px;top:488.66px;font-size:8.33px;line-height:10px;color:#f4f4f4;">04:46:2...</span>
<span class="mono" style="left:68.8px;top:488.66px;font-size:8.33px;line-height:10px;color:#f4f4f4;">RequestNVItemIDRead 4398</span>
<span class="mono" style="left:10.6px;top:498.02px;font-size:8.33px;line-height:10px;color:#5ade5a;">04:46:2...</span>
<span class="mono" style="left:68.8px;top:498.02px;font-size:8.33px;line-height:10px;color:#5ade5a;">DIAG TX item:</span>
<span class="mono" style="left:10.6px;top:507.38px;font-size:8.33px;line-height:10px;color:#5ade5a;">04:46:2...</span>
<span class="mono" style="left:68.8px;top:507.38px;font-size:8.33px;line-height:10px;color:#5ade5a;">0x26 2E 11 00 00 00 00 00 00 00 00 00 00 00 00 ...</span>
<span class="mono" style="left:10.6px;top:516.74px;font-size:8.33px;line-height:10px;color:#6e7aff;">04:46:2...</span>
<span class="mono" style="left:68.8px;top:516.74px;font-size:8.33px;line-height:10px;color:#6e7aff;">DIAG RX item:</span>
<span class="mono" style="left:10.6px;top:526.1px;font-size:8.33px;line-height:10px;color:#6e7aff;">04:46:2...</span>
<span class="mono" style="left:68.8px;top:526.1px;font-size:8.33px;line-height:10px;color:#6e7aff;">0x26 2E 11 01 00 00 00 00 00 00 00 00 00 00 00 ...</span>
<div style="left:1011.5px;top:81px;width:11.5px;height:493.5px;background:#f0f0f0;border-left:1px solid #e2e2e2;"></div>
<div style="left:1013px;top:115.3px;width:11px;height:429px;border:1px solid #b4b4b4;border-right:none;border-radius:1.5px 0 0 1.5px;background:linear-gradient(to right,#f7f7f7,#ebebeb 45%,#d6d6d6 55%,#cdcdcd);"></div>
<svg style="left:1015.5px;top:86.6px" width="5" height="2.8" viewBox="0 0 5 2.8"><polygon points="0,2.8 5,2.8 2.5,0" fill="#404040"/></svg>
<svg style="left:1015.5px;top:565.6px" width="5" height="2.8" viewBox="0 0 5 2.8"><polygon points="0,0 5,0 2.5,2.8" fill="#404040"/></svg>
<div style="left:1015.5px;top:327.8px;width:5.5px;height:1px;background:#6a6a6a;"></div>
<div style="left:1015.5px;top:329.8px;width:5.5px;height:1px;background:#6a6a6a;"></div>
<div style="left:1015.5px;top:331.8px;width:5.5px;height:1px;background:#6a6a6a;"></div>
<div style="left:0px;top:574px;width:1023px;height:13.4px;background:#f0f0f0;border-top:1px solid #e6e6e6;border-left:2px solid #8e8e8e;"></div>
<div style="left:14.6px;top:575.6px;width:967.6px;height:10.6px;border:1px solid #a6a6a6;border-radius:1.5px;background:linear-gradient(#f6f6f6,#eaeaea 48%,#d6d6d6 52%,#d2d2d2);"></div>
<svg style="left:5.6px;top:578.5px" width="2.8" height="5" viewBox="0 0 2.8 5"><polygon points="2.8,0 2.8,5 0,2.5" fill="#404040"/></svg>
<svg style="left:1004.1px;top:578.5px" width="2.8" height="5" viewBox="0 0 2.8 5"><polygon points="0,0 0,5 2.8,2.5" fill="#404040"/></svg>
<div style="left:495px;top:578.5px;width:1px;height:5.5px;background:#6a6a6a;"></div>
<div style="left:497px;top:578.5px;width:1px;height:5.5px;background:#6a6a6a;"></div>
<div style="left:499px;top:578.5px;width:1px;height:5.5px;background:#6a6a6a;"></div>
<div style="left:1011.5px;top:574.4px;width:11.5px;height:13px;background:#f0f0f0;"></div>
<div style="left:0px;top:587.4px;width:1023px;height:11.6px;background:#f0f0f0;border-top:1px solid #d9d9d9;"></div>
<span class="sim" style="left:1.4px;top:590.6px;line-height:10px;color:#000;">Refer to the User Guide for help (Help Menu)</span>
<span class="sim" style="left:645.4px;top:590.6px;line-height:10px;color:#000;">0.000 KB/s</span>
<span class="sim" style="left:702.3px;top:590.6px;line-height:10px;color:#000;">0.000 KB/s</span>
<span class="sim" style="left:760px;top:590.6px;line-height:10px;color:#000;">0</span>
<span class="sim" style="left:809.4px;top:590.6px;line-height:10px;color:#000;">0</span>
<span class="sim" style="left:858px;top:590.6px;line-height:10px;color:#000;">88.800 KB</span>
<span class="sim" style="left:907.5px;top:590.6px;line-height:10px;color:#000;">17.95 Mins</span>
<span class="sim" style="left:957px;top:590.6px;line-height:10px;color:#000;">12:58:07.674</span>
<div style="left:699.4px;top:589px;width:1px;height:10px;background:#d4d4d4;"></div>
<div style="left:757.5px;top:589px;width:1px;height:10px;background:#d4d4d4;"></div>
<div style="left:807.5px;top:589px;width:1px;height:10px;background:#d4d4d4;"></div>
<div style="left:856.4px;top:589px;width:1px;height:10px;background:#d4d4d4;"></div>
<div style="left:905px;top:589px;width:1px;height:10px;background:#d4d4d4;"></div>
<div style="left:954.6px;top:589px;width:1px;height:10px;background:#d4d4d4;"></div>
<div style="left:1011.6px;top:589px;width:1px;height:10px;background:#d4d4d4;"></div>
</body></html>
